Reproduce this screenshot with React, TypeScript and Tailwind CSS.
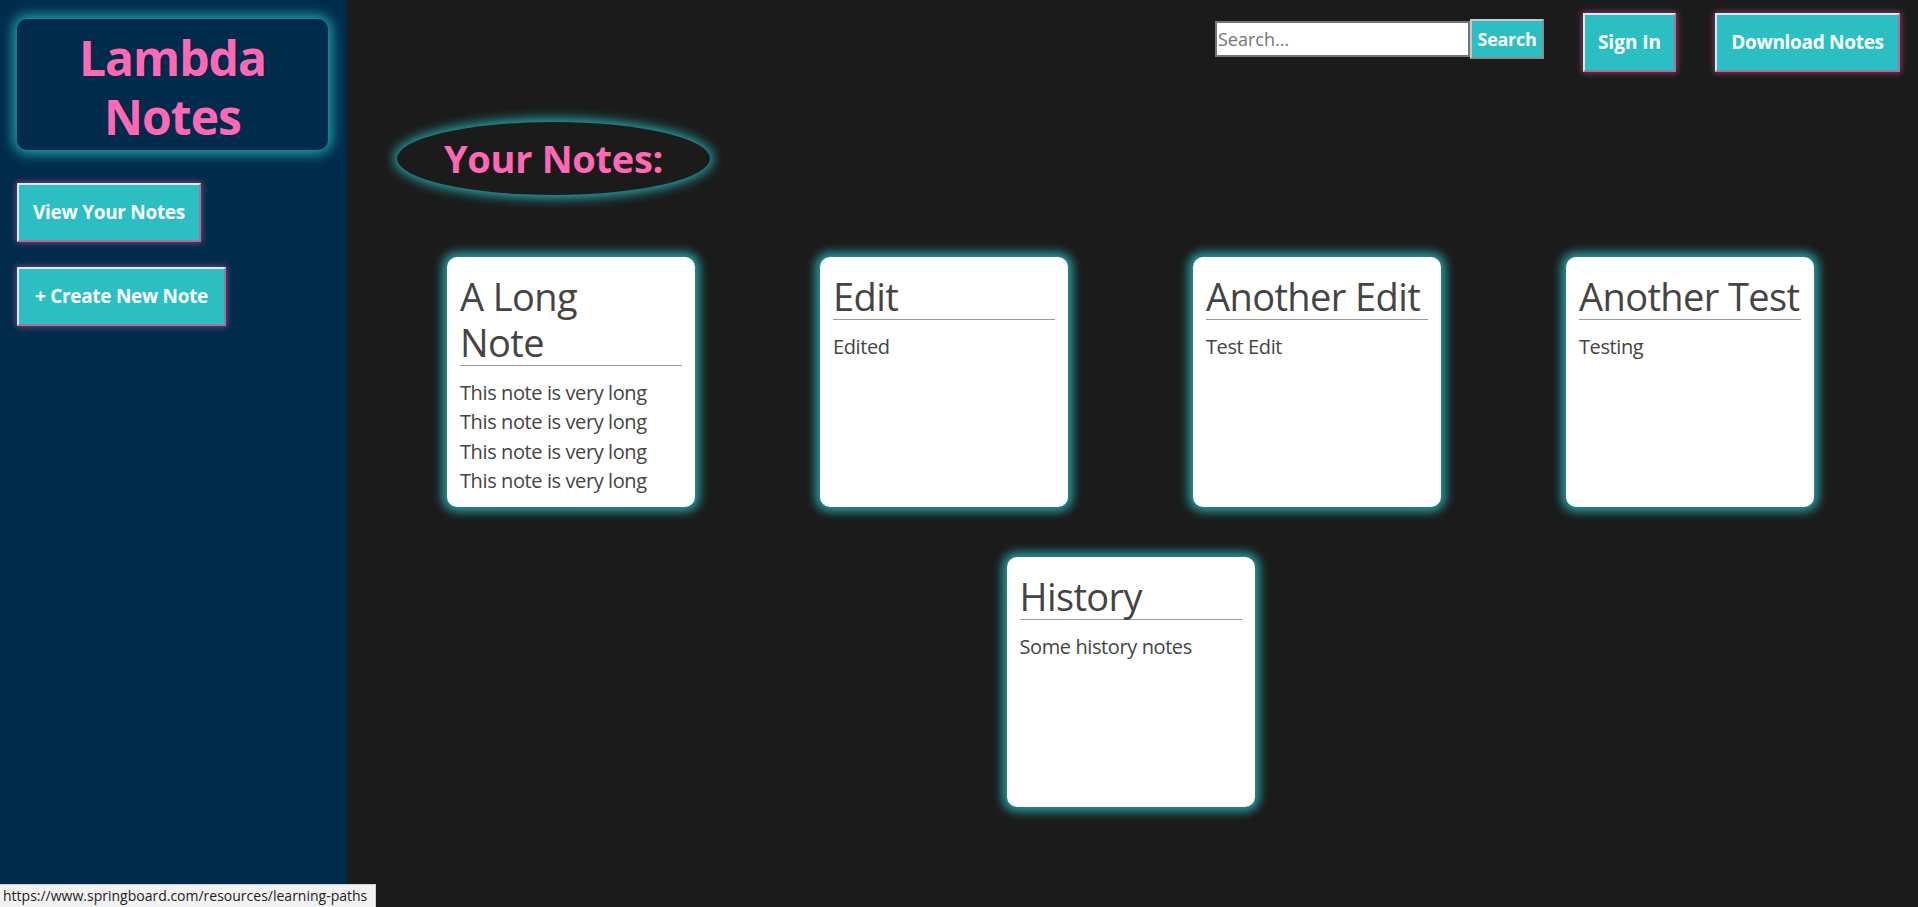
import React from "react";

const notes = [
  { title: ["A Long", "Note"], body: ["This note is very long", "This note is very long", "This note is very long", "This note is very long"] },
  { title: ["Edit"], body: ["Edited"] },
  { title: ["Another Edit"], body: ["Test Edit"] },
  { title: ["Another Test"], body: ["Testing"] },
  { title: ["History"], body: ["Some history notes"] },
];

function NoteCard({ title, body }: { title: string[]; body: string[] }) {
  return (
    <div className="w-[248px] h-[250px] bg-white rounded-[10px] overflow-hidden px-[13px] pt-[16px] shadow-[0_0_10px_5px_rgba(43,191,196,0.75)]">
      <h2 className="text-[38px] leading-[46px] font-normal tracking-[-0.6px] text-[#444] border-b border-[#999] whitespace-nowrap">
        {title.map((t, i) => (
          <div key={i}>{t}</div>
        ))}
      </h2>
      <div className="mt-[12px] text-[20px] leading-[29.3px] tracking-[-0.4px] text-[#444]">
        {body.map((b, i) => (
          <div key={i}>{b}</div>
        ))}
      </div>
    </div>
  );
}

const navBtn =
  "h-[59px] bg-[#2bbfc4] text-white font-bold text-[19px] flex items-center justify-center border-2 border-t-[#e4e4f2] border-l-[#e4e4f2] border-r-[#a9729a] border-b-[#a9729a] shadow-[0_0_6px_1px_rgba(255,105,180,0.45)]";

export default function App() {
  return (
    <div className="relative flex w-full h-[907px] overflow-hidden font-['Open_Sans','Noto_Sans',sans-serif]">
      <aside className="w-[347px] shrink-0 bg-[#002b4b] pl-[17px] pt-[19px]">
        <div className="w-[311px] h-[131px] rounded-[10px] bg-[#002b4b] pt-[9px] text-center text-[#ff69b4] font-bold text-[48px] leading-[59px] tracking-[-1px] shadow-[0_0_14px_3px_rgba(43,191,196,0.9)]">
          <div>Lambda</div>
          <div>Notes</div>
        </div>
        <button className={`${navBtn} w-[184px] mt-[33px] tracking-[-0.3px]`}>View Your Notes</button>
        <button className={`${navBtn} w-[209px] mt-[25px] tracking-[-0.3px]`}>+ Create New Note</button>
      </aside>

      <main className="flex-1 bg-[#1b1b1b]">
        <div className="flex justify-end items-start pr-[18px] h-[72px]">
          <div className="flex items-start mt-[19px]">
            <input
              placeholder="Search..."
              className="w-[255px] h-[36px] mt-[2px] bg-white border-2 border-[#767676] px-[1px] text-[18px] text-black placeholder:text-[#757575] outline-none"
            />
            <button className="w-[74px] h-[40px] bg-[#2bbfc4] text-white font-bold text-[18px] border-2 border-t-[#c8c8c8] border-l-[#c8c8c8] border-r-[#8a8a8a] border-b-[#8a8a8a] tracking-[-0.3px]">
              Search
            </button>
          </div>
          <button className={`${navBtn} w-[93px] mt-[13px] ml-[39px]`}>Sign In</button>
          <button className={`${navBtn} w-[185px] mt-[13px] ml-[39px] tracking-[-0.3px]`}>Download Notes</button>
        </div>

        <div className="ml-[50px] mt-[50px] w-[313px] h-[73px] rounded-[50%] bg-[#1b1b1b] flex items-center justify-center text-[#ff69b4] font-bold text-[38px] tracking-[-0.3px] shadow-[0_0_12px_3px_rgba(43,191,196,0.9)]">
          Your Notes:
        </div>

        <div className="mt-[62px] pr-[4px] flex flex-wrap justify-center gap-x-[125px] gap-y-[50px]">
          {notes.map((n, i) => (
            <NoteCard key={i} title={n.title} body={n.body} />
          ))}
        </div>
      </main>

      <div className="absolute left-0 bottom-0 h-[23px] w-[376px] bg-[#f2f2f2] border-t border-r border-[#d0d0d0] pl-[3px] text-[14px] leading-[22px] text-[#222] whitespace-nowrap">
        https://www.springboard.com/resources/learning-paths
      </div>
    </div>
  );
}
